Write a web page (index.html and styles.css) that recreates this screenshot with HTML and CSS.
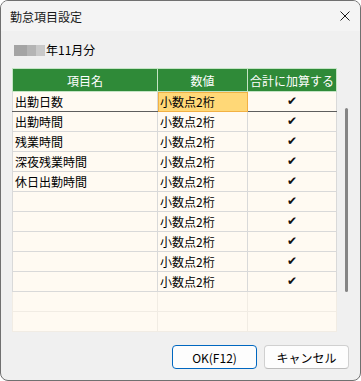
FILE: index.html
```html
<!DOCTYPE html>
<html lang="ja">
<head>
    <meta charset="UTF-8">
    <meta name="viewport" content="width=device-width, initial-scale=1.0">
    <title>勤怠項目設定</title>
    <link rel="stylesheet" href="styles.css">
</head>
<body>
    <div class="window">
        <div class="titlebar">
            <span class="title">勤怠項目設定</span>
            <svg class="close" width="10" height="10" viewBox="0 0 10 10">
                <path d="M0.5 0.5 L9.5 9.5 M9.5 0.5 L0.5 9.5" stroke="#1a1a1a" stroke-width="1" fill="none"/>
            </svg>
        </div>
        <div class="content">
            <div class="period"><span class="masked"></span>年11月分</div>
            <div class="grid-wrap">
                <table class="grid">
                    <thead>
                        <tr>
                            <th class="col-name">項目名</th>
                            <th class="col-value">数値</th>
                            <th class="col-sum">合計に加算する</th>
                        </tr>
                    </thead>
                    <tbody id="rows"></tbody>
                </table>
                <div class="scrollbar"></div>
            </div>
            <div class="buttons">
                <button class="btn btn-primary">OK(F12)</button>
                <button class="btn">キャンセル</button>
            </div>
        </div>
    </div>

    <script>
        const items = ["出勤日数", "出勤時間", "残業時間", "深夜残業時間", "休日出勤時間", "", "", "", "", ""];
        const rowsEl = document.getElementById("rows");

        items.forEach((name, index) => {
            const tr = document.createElement("tr");
            if (index === 0) tr.className = "current";
            tr.innerHTML = `
                <td>${name}</td>
                <td class="${index === 0 ? "selected" : ""}">小数点2桁</td>
                <td class="check">✔</td>
            `;
            rowsEl.appendChild(tr);
        });

        for (let i = 0; i < 2; i++) {
            const tr = document.createElement("tr");
            tr.className = "blank";
            tr.innerHTML = "<td></td><td></td><td></td>";
            rowsEl.appendChild(tr);
        }
    </script>
</body>
</html>
```

FILE: styles.css
```css
html, body {
    margin: 0;
    background-color: #fff;
}

body {
    font-family: "Noto Sans CJK JP", sans-serif;
    font-size: 12px;
    color: #000;
}

.window {
    box-sizing: border-box;
    width: 361px;
    height: 381px;
    border: 1px solid #707070;
    border-radius: 8px;
    background-color: #f0f0f0;
    overflow: hidden;
    display: flex;
    flex-direction: column;
}

.titlebar {
    height: 30px;
    background-color: #f4f4f4;
    display: flex;
    align-items: center;
    justify-content: space-between;
    padding: 0 10px 0 9px;
    flex-shrink: 0;
}

.title {
    font-size: 12px;
    color: #1a1a1a;
}

.content {
    flex: 1;
    padding: 0 11px;
}

.period {
    margin-top: 12px;
    height: 14px;
    line-height: 14px;
    display: flex;
    align-items: center;
    padding-left: 2px;
}

.masked {
    display: inline-block;
    width: 31px;
    height: 11px;
    margin-right: 1px;
    background: linear-gradient(to right, #a4a4a4 0, #a4a4a4 13px, #b4b4b4 13px, #b4b4b4 22px, #c9c9c9 22px);
}

.grid-wrap {
    display: flex;
    margin-top: 11px;
    height: 263px;
}

.grid {
    border-collapse: collapse;
    width: 321px;
    height: 263px;
    background-color: #fffaf2;
    table-layout: fixed;
}

.grid th {
    height: 22px;
    padding: 0;
    background-color: #2f8a38;
    color: #fff;
    font-weight: normal;
    border: 1px solid #c4e4c4;
}

.col-name { width: 144px; }
.col-value { width: 89px; }
.col-sum { width: 88px; }

.grid td {
    height: 19px;
    padding: 0 0 0 2px;
    border: 1px solid #d9d9d9;
    white-space: nowrap;
    line-height: 19px;
}

.grid tr.current td {
    border-top-color: #9a9a9a;
    border-bottom-color: #5e5e5e;
}

.grid td.selected {
    background-color: #ffd877;
    outline: 1px solid #f2b144;
    outline-offset: -1px;
}

.grid td.check {
    text-align: center;
    padding: 0;
    font-family: "DejaVu Sans", sans-serif;
    font-size: 12px;
    color: #111;
}

.grid tr.blank td {
    border-color: #f1ece4;
}

.scrollbar {
    width: 3px;
    height: 184px;
    margin-top: 40px;
    margin-left: 8px;
    background-color: #858585;
    border-radius: 2px;
}

.buttons {
    display: flex;
    justify-content: flex-end;
    gap: 7px;
    margin-top: 14px;
}

.btn {
    box-sizing: border-box;
    width: 85px;
    height: 24px;
    border: 1px solid #d0d0d0;
    border-bottom-color: #bcbcbc;
    border-radius: 4px;
    background-color: #fdfdfd;
    font-family: "Noto Sans CJK JP", sans-serif;
    font-size: 12px;
    color: #000;
    padding: 0;
}

.btn-primary {
    border-color: #0067c0;
}
```
